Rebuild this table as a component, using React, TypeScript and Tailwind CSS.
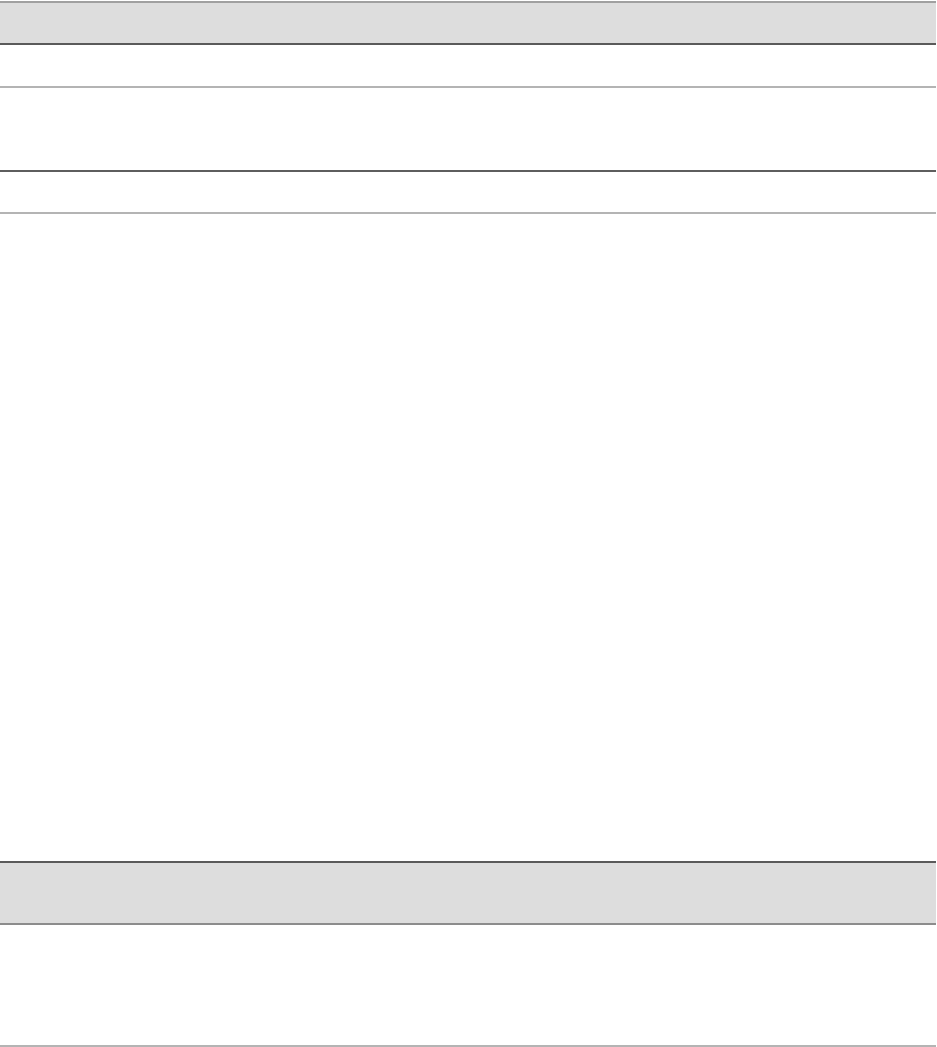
const rowsTop = [
  { h: 'h-[43px]', line: 'border-[#b4b4b4]' },
  { h: 'h-[84px]', line: 'border-[#5e5e5e]' },
  { h: 'h-[42px]', line: 'border-[#b4b4b4]' },
];

const App = () => {
  return (
    <div className="w-[936px] bg-white pt-px font-['Liberation_Sans',sans-serif]">
      {/* first table */}
      <div className="flex flex-col">
        <div className="h-[44px] bg-[#dddddd] border-t-2 border-b-2 border-t-[#a0a0a0] border-b-[#5a5a5a]" />
        {rowsTop.map((r, i) => (
          <div key={i} className={`${r.h} border-b-2 ${r.line}`} />
        ))}
      </div>

      <div className="h-[647px]" />

      {/* second table */}
      <div className="flex flex-col">
        <div className="h-[64px] bg-[#dddddd] border-t-2 border-b-2 border-t-[#5a5a5a] border-b-[#8c8c8c]" />
        <div className="h-[122px] border-b-2 border-[#b4b4b4]" />
      </div>
    </div>
  );
};

export default App;
